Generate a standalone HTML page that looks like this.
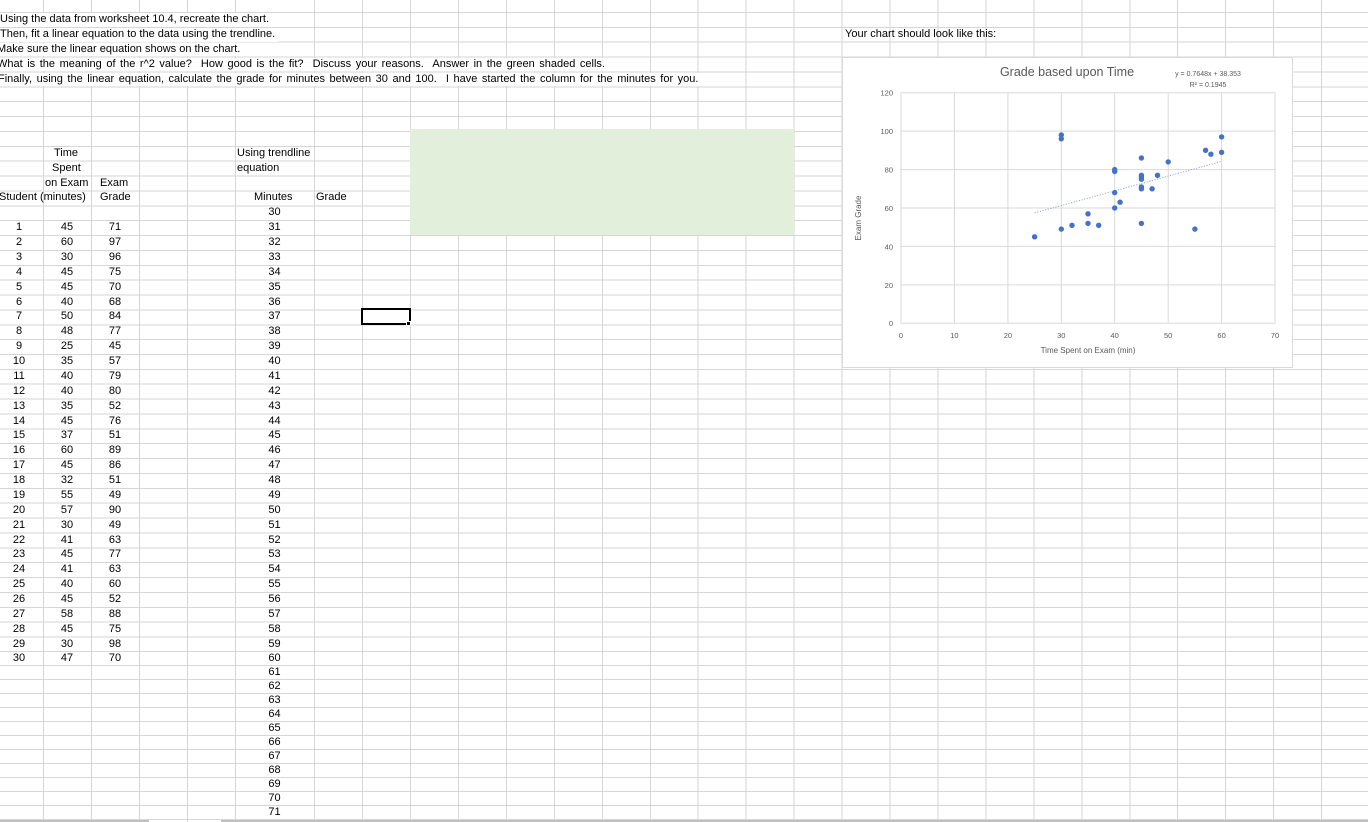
<!DOCTYPE html>
<html><head><meta charset="utf-8"><style>
*{margin:0;padding:0;box-sizing:border-box}
body{width:1368px;height:822px;overflow:hidden;background:#fff;position:relative;font-family:"Liberation Sans",Arial,sans-serif;font-size:11px;color:#000}
.gh1{position:absolute;left:0;top:12px;width:1368px;height:640px;background:repeating-linear-gradient(to bottom,#d6d6d6 0 1px,transparent 1px 14.87px)}
.gh2{position:absolute;left:0;top:651.4px;width:1368px;height:170px;background:repeating-linear-gradient(to bottom,#d6d6d6 0 1px,transparent 1px 14px)}
.gv{position:absolute;left:410px;top:0;width:958px;height:822px;background:repeating-linear-gradient(to right,#d6d6d6 0 1px,transparent 1px 47.95px)}
.v{position:absolute;top:0;width:1px;height:822px;background:#d6d6d6}
.t{position:absolute;white-space:nowrap;line-height:15px;height:15px}
.w{position:absolute;white-space:nowrap;line-height:13.8px;height:13.8px;background:#fff;padding-right:3px}
.r{position:absolute;left:0;width:400px;height:15px;line-height:15px}
.r span{position:absolute;text-align:center}
.a{left:0;width:38px}.b{left:43px;width:48px}.g{left:91px;width:48px}.m{left:235px;width:79px}
</style></head><body>
<div class="gh1"></div><div class="gh2"></div><div class="gv"></div>
<div class="v" style="left:43px"></div><div class="v" style="left:91px"></div><div class="v" style="left:139px"></div><div class="v" style="left:187px"></div><div class="v" style="left:235px"></div><div class="v" style="left:314px"></div><div class="v" style="left:362px"></div>
<div style="position:absolute;left:410px;top:129px;width:384px;height:106px;background:#e2efda"></div>
<div style="position:absolute;left:361px;top:308px;width:50px;height:17px;border:2px solid #000;background:#fff"></div>
<div style="position:absolute;left:406px;top:321px;width:5px;height:5px;background:#000;border:1px solid #fff"></div>
<div class="w" style="left:0;top:13px">Using the data from worksheet 10.4, recreate the chart.</div>
<div class="w" style="left:0;top:27.9px">Then, fit a linear equation to the data using the trendline.</div>
<div class="w" style="left:0;top:42.7px;text-indent:-3px">Make sure the linear equation shows on the chart.</div>
<div class="w" style="left:0;top:57.6px;text-indent:-3px;word-spacing:1.5px">What is the meaning of the r^2 value?&nbsp; How good is the fit?&nbsp; Discuss your reasons.&nbsp; Answer in the green shaded cells.</div>
<div class="w" style="left:0;top:72.5px;text-indent:-2px;word-spacing:1.5px">Finally, using the linear equation, calculate the grade for minutes between 30 and 100.&nbsp; I have started the column for the minutes for you.</div>
<div class="t" style="left:845px;top:26.9px">Your chart should look like this:</div>
<div class="t" style="left:54px;top:145.8px">Time</div>
<div class="t" style="left:52px;top:160.7px">Spent</div>
<div class="t" style="left:45px;top:175.6px">on Exam</div>
<div class="t" style="left:100px;top:175.6px">Exam</div>
<div class="t" style="left:-1px;top:190.4px">Student (minutes)</div>
<div class="t" style="left:100px;top:190.4px">Grade</div>
<div class="t" style="left:237px;top:145.8px">Using trendline</div>
<div class="t" style="left:237px;top:160.7px">equation</div>
<div class="t" style="left:254px;top:190.4px">Minutes</div>
<div class="t" style="left:316px;top:190.4px">Grade</div>
<div class="r" style="top:205.3px"><span class="m">30</span></div>
<div class="r" style="top:220.2px"><span class="a">1</span><span class="b">45</span><span class="g">71</span><span class="m">31</span></div>
<div class="r" style="top:235.1px"><span class="a">2</span><span class="b">60</span><span class="g">97</span><span class="m">32</span></div>
<div class="r" style="top:249.9px"><span class="a">3</span><span class="b">30</span><span class="g">96</span><span class="m">33</span></div>
<div class="r" style="top:264.8px"><span class="a">4</span><span class="b">45</span><span class="g">75</span><span class="m">34</span></div>
<div class="r" style="top:279.7px"><span class="a">5</span><span class="b">45</span><span class="g">70</span><span class="m">35</span></div>
<div class="r" style="top:294.5px"><span class="a">6</span><span class="b">40</span><span class="g">68</span><span class="m">36</span></div>
<div class="r" style="top:309.4px"><span class="a">7</span><span class="b">50</span><span class="g">84</span><span class="m">37</span></div>
<div class="r" style="top:324.3px"><span class="a">8</span><span class="b">48</span><span class="g">77</span><span class="m">38</span></div>
<div class="r" style="top:339.1px"><span class="a">9</span><span class="b">25</span><span class="g">45</span><span class="m">39</span></div>
<div class="r" style="top:354.0px"><span class="a">10</span><span class="b">35</span><span class="g">57</span><span class="m">40</span></div>
<div class="r" style="top:368.9px"><span class="a">11</span><span class="b">40</span><span class="g">79</span><span class="m">41</span></div>
<div class="r" style="top:383.8px"><span class="a">12</span><span class="b">40</span><span class="g">80</span><span class="m">42</span></div>
<div class="r" style="top:398.6px"><span class="a">13</span><span class="b">35</span><span class="g">52</span><span class="m">43</span></div>
<div class="r" style="top:413.5px"><span class="a">14</span><span class="b">45</span><span class="g">76</span><span class="m">44</span></div>
<div class="r" style="top:428.4px"><span class="a">15</span><span class="b">37</span><span class="g">51</span><span class="m">45</span></div>
<div class="r" style="top:443.2px"><span class="a">16</span><span class="b">60</span><span class="g">89</span><span class="m">46</span></div>
<div class="r" style="top:458.1px"><span class="a">17</span><span class="b">45</span><span class="g">86</span><span class="m">47</span></div>
<div class="r" style="top:473.0px"><span class="a">18</span><span class="b">32</span><span class="g">51</span><span class="m">48</span></div>
<div class="r" style="top:487.8px"><span class="a">19</span><span class="b">55</span><span class="g">49</span><span class="m">49</span></div>
<div class="r" style="top:502.7px"><span class="a">20</span><span class="b">57</span><span class="g">90</span><span class="m">50</span></div>
<div class="r" style="top:517.6px"><span class="a">21</span><span class="b">30</span><span class="g">49</span><span class="m">51</span></div>
<div class="r" style="top:532.5px"><span class="a">22</span><span class="b">41</span><span class="g">63</span><span class="m">52</span></div>
<div class="r" style="top:547.3px"><span class="a">23</span><span class="b">45</span><span class="g">77</span><span class="m">53</span></div>
<div class="r" style="top:562.2px"><span class="a">24</span><span class="b">41</span><span class="g">63</span><span class="m">54</span></div>
<div class="r" style="top:577.1px"><span class="a">25</span><span class="b">40</span><span class="g">60</span><span class="m">55</span></div>
<div class="r" style="top:591.9px"><span class="a">26</span><span class="b">45</span><span class="g">52</span><span class="m">56</span></div>
<div class="r" style="top:606.8px"><span class="a">27</span><span class="b">58</span><span class="g">88</span><span class="m">57</span></div>
<div class="r" style="top:621.7px"><span class="a">28</span><span class="b">45</span><span class="g">75</span><span class="m">58</span></div>
<div class="r" style="top:636.5px"><span class="a">29</span><span class="b">30</span><span class="g">98</span><span class="m">59</span></div>
<div class="r" style="top:651.4px"><span class="a">30</span><span class="b">47</span><span class="g">70</span><span class="m">60</span></div>
<div class="r" style="top:665.4px"><span class="m">61</span></div>
<div class="r" style="top:679.4px"><span class="m">62</span></div>
<div class="r" style="top:693.4px"><span class="m">63</span></div>
<div class="r" style="top:707.4px"><span class="m">64</span></div>
<div class="r" style="top:721.4px"><span class="m">65</span></div>
<div class="r" style="top:735.4px"><span class="m">66</span></div>
<div class="r" style="top:749.4px"><span class="m">67</span></div>
<div class="r" style="top:763.4px"><span class="m">68</span></div>
<div class="r" style="top:777.4px"><span class="m">69</span></div>
<div class="r" style="top:791.4px"><span class="m">70</span></div>
<div class="r" style="top:805.4px"><span class="m">71</span></div>
<div style="position:absolute;left:0;top:820px;width:149px;height:2px;background:#c0c0c0"></div>
<div style="position:absolute;left:221px;top:820px;width:1147px;height:2px;background:#c0c0c0"></div>

<svg style="position:absolute;left:842px;top:57px" width="451" height="311" viewBox="0 0 451 311" font-family="Liberation Sans, Arial, sans-serif">
<rect x="0.5" y="0.5" width="450" height="310" fill="#fff" stroke="#d9d9d9"/>
<g stroke="#d9d9d9" stroke-width="1">
<line x1="59" y1="35.7" x2="433" y2="35.7"/><line x1="59" y1="74.1" x2="433" y2="74.1"/><line x1="59" y1="112.6" x2="433" y2="112.6"/><line x1="59" y1="151" x2="433" y2="151"/><line x1="59" y1="189.4" x2="433" y2="189.4"/><line x1="59" y1="227.9" x2="433" y2="227.9"/><line x1="59" y1="266.3" x2="433" y2="266.3"/>
<line x1="59" y1="35.7" x2="59" y2="266.3"/><line x1="112.4" y1="35.7" x2="112.4" y2="266.3"/><line x1="165.9" y1="35.7" x2="165.9" y2="266.3"/><line x1="219.3" y1="35.7" x2="219.3" y2="266.3"/><line x1="272.7" y1="35.7" x2="272.7" y2="266.3"/><line x1="326.2" y1="35.7" x2="326.2" y2="266.3"/><line x1="379.6" y1="35.7" x2="379.6" y2="266.3"/><line x1="433" y1="35.7" x2="433" y2="266.3"/>
</g>
<g font-size="7.5" fill="#595959" text-anchor="end">
<text x="51" y="38.5">120</text><text x="51" y="77">100</text><text x="51" y="115.5">80</text><text x="51" y="154">60</text><text x="51" y="192.3">40</text><text x="51" y="230.8">20</text><text x="51" y="269.2">0</text>
</g>
<g font-size="7.5" fill="#595959" text-anchor="middle">
<text x="59" y="281">0</text><text x="112.4" y="281">10</text><text x="165.9" y="281">20</text><text x="219.3" y="281">30</text><text x="272.7" y="281">40</text><text x="326.2" y="281">50</text><text x="379.6" y="281">60</text><text x="433" y="281">70</text>
</g>
<text x="246" y="296" font-size="8" fill="#595959" text-anchor="middle">Time Spent on Exam (min)</text>
<text x="0" y="0" font-size="8" fill="#595959" text-anchor="middle" transform="translate(19 161) rotate(-90)">Exam Grade</text>
<text x="225" y="19" font-size="12.5" fill="#595959" text-anchor="middle">Grade based upon Time</text>
<text x="366" y="19" font-size="7" fill="#595959" text-anchor="middle">y = 0.7648x + 38.353</text>
<text x="366" y="30" font-size="7" fill="#595959" text-anchor="middle">R² = 0.1945</text>
<line x1="192.6" y1="155.9" x2="379.6" y2="104.4" stroke="#8faadc" stroke-width="1" stroke-dasharray="1.2 1.5"/>
<g fill="#4472c4">
<circle cx="299.4" cy="129.9" r="2.7"/><circle cx="379.6" cy="79.9" r="2.7"/><circle cx="219.3" cy="81.8" r="2.7"/><circle cx="299.4" cy="122.2" r="2.7"/><circle cx="299.4" cy="131.8" r="2.7"/><circle cx="272.7" cy="135.6" r="2.7"/><circle cx="326.2" cy="104.9" r="2.7"/><circle cx="315.5" cy="118.3" r="2.7"/><circle cx="192.6" cy="179.8" r="2.7"/><circle cx="246" cy="156.8" r="2.7"/><circle cx="272.7" cy="114.5" r="2.7"/><circle cx="272.7" cy="112.6" r="2.7"/><circle cx="246" cy="166.4" r="2.7"/><circle cx="299.4" cy="120.3" r="2.7"/><circle cx="256.7" cy="168.3" r="2.7"/><circle cx="379.6" cy="95.3" r="2.7"/><circle cx="299.4" cy="101" r="2.7"/><circle cx="230" cy="168.3" r="2.7"/><circle cx="352.9" cy="172.1" r="2.7"/><circle cx="363.6" cy="93.3" r="2.7"/><circle cx="219.3" cy="172.1" r="2.7"/><circle cx="278.1" cy="145.2" r="2.7"/><circle cx="299.4" cy="118.3" r="2.7"/><circle cx="272.7" cy="151" r="2.7"/><circle cx="299.4" cy="166.4" r="2.7"/><circle cx="368.9" cy="97.2" r="2.7"/><circle cx="219.3" cy="78" r="2.7"/><circle cx="310.1" cy="131.8" r="2.7"/>
</g>
</svg>
</body></html>
